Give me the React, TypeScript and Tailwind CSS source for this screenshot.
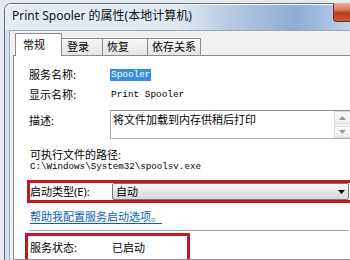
export default function App() {
  const mono = "font-['Liberation_Mono',monospace]";
  return (
    <div className="w-[350px] h-[260px] overflow-hidden bg-[#e6eaef] pl-[4px] pt-[3px] font-['Noto_Sans','Noto_Sans_CJK_SC',sans-serif] text-black">
      <div className="w-[400px] h-[257px] rounded-tl-[7px] border-l border-t border-[#5f6f82] bg-[#d6e0eb] flex flex-col">
        {/* title bar */}
        <div className="w-[345px] h-[26px] flex items-start rounded-tl-[6px] bg-[linear-gradient(90deg,#e4ebf3_0%,#e0e8f1_50%,#b4c9e2_66%,#8eadd5_84%,#a9c2e2_94%,#c4d5ea_100%)] shadow-[inset_0_1px_0_#ffffff]">
          <span className="ml-[7px] mt-[4px] text-[12px] leading-[16px] whitespace-nowrap text-[#111]">
            Print Spooler 的属性(本地计算机)
          </span>
          <div className="ml-auto mt-[-1px] w-[17px] h-[19px] rounded-bl-[4px] border border-r-0 border-t-0 border-[#6e2c22] bg-[linear-gradient(180deg,#eab0a2_0%,#d8735c_40%,#bf3a22_55%,#d0583a_100%)]" />
        </div>
        {/* client */}
        <div className="flex-1 ml-[4px] border-l border-t border-[#9ba9b9] bg-[#f0f0f0] pl-[3px] pt-[2px] flex flex-col">
          {/* tabs */}
          <div className="flex items-end h-[22px] pl-[2px] text-[11px]">
            <div className="relative z-10 mb-[-1px] w-[47px] h-[23px] bg-white border border-b-0 border-[#898c95] pl-[7px] pt-[4px] leading-[14px]">
              常规
            </div>
            <div className="w-[41px] h-[17px] border-t border-r border-[#898c95] bg-[linear-gradient(180deg,#f6f6f6,#e4e4e4)] pl-[5px] pt-[1px] leading-[14px]">
              登录
            </div>
            <div className="w-[45px] h-[17px] border-t border-r border-[#898c95] bg-[linear-gradient(180deg,#f6f6f6,#e4e4e4)] pl-[4px] pt-[1px] leading-[14px]">
              恢复
            </div>
            <div className="w-[53px] h-[17px] border-t border-r border-[#898c95] bg-[linear-gradient(180deg,#f6f6f6,#e4e4e4)] pl-[4px] pt-[1px] leading-[14px]">
              依存关系
            </div>
          </div>
          {/* panel */}
          <div className="flex-1 border border-[#898c95] bg-white flex flex-col pl-[15px] text-[11px]">
            <div className="mt-[12px] h-[14px] flex items-center">
              <span className="w-[81px] leading-[14px]">服务名称:</span>
              <span className={`${mono} text-[9.4px] leading-[12px] h-[12px] px-[1px] bg-[#3a8ee0] text-white`}>Spooler</span>
            </div>
            <div className="mt-[6px] h-[14px] flex items-center">
              <span className="w-[81px] leading-[14px]">显示名称:</span>
              <span className={`${mono} text-[9.4px] leading-[12px] pl-[1px]`}>Print Spooler</span>
            </div>
            <div className="mt-[8px] flex items-start">
              <span className="w-[81px] mt-[4px] leading-[14px]">描述:</span>
              <div className="w-[242px] h-[29px] border border-[#abadb3] border-t-[#8e9197] flex">
                <div className="flex-1 pl-[2px] pt-[2px] leading-[14px]">将文件加载到内存供稍后打印</div>
                <div className="w-[17px] flex flex-col bg-[#f2f2f2]">
                  <div className="h-[13px] border border-[#dcdcdc] bg-[linear-gradient(180deg,#fafafa,#ececec)] flex items-center justify-center">
                    <svg width="7" height="4" viewBox="0 0 7 4"><path d="M0 4 L3.5 0 L7 4 Z" fill="#9a9a9a" /></svg>
                  </div>
                  <div className="flex-1" />
                  <div className="h-[12px] border border-[#dcdcdc] bg-[linear-gradient(180deg,#fafafa,#ececec)] flex items-center justify-center">
                    <svg width="7" height="4" viewBox="0 0 7 4"><path d="M0 0 L3.5 4 L7 0 Z" fill="#9a9a9a" /></svg>
                  </div>
                </div>
              </div>
            </div>
            <div className="mt-[9px] h-[13px] leading-[13px] ml-[1px]">可执行文件的路径:</div>
            <div className={`h-[12px] ml-[1px] ${mono} text-[9.2px] leading-[12px] whitespace-nowrap`}>
              C:\Windows\System32\spoolsv.exe
            </div>
            {/* startup type red box */}
            <div className="mt-[7px] ml-[-2px] w-[340px] h-[23px] border-[3px] border-r-0 border-[#c0181f] flex items-center">
              <span className="w-[82px] leading-[14px]">启动类型(E):</span>
              <div className="w-[237px] h-[17px] border border-[#7a7a7a] rounded-[2px] bg-[linear-gradient(180deg,#f5f5f5_0%,#eeeeee_35%,#dfe5e3_55%,#d8d3e2_100%)] flex items-center pl-[3px] pr-[3px]">
                <span className="flex-1 leading-[14px]">自动</span>
                <svg width="7" height="4" viewBox="0 0 7 4"><path d="M0 0 L7 0 L3.5 4 Z" fill="#000" /></svg>
              </div>
            </div>
            <div className="mt-[7px] h-[14px] ml-[1px] leading-[14px] text-[#0a5fb4] underline underline-offset-[2px] whitespace-nowrap">
              帮助我配置服务启动选项。
            </div>
            <div className="mt-[6px] w-[320px] h-[1px] bg-[#a0a0a0]" />
            {/* status red box */}
            <div className="mt-[2px] ml-[-4px] w-[165px] flex-1 border-[3px] border-b-0 border-[#c0181f] pl-[2px] pt-[5px]">
              <div className="h-[14px] flex items-center">
                <span className="w-[82px] leading-[14px]">服务状态:</span>
                <span className="leading-[14px]">已启动</span>
              </div>
            </div>
          </div>
        </div>
      </div>
    </div>
  );
}
